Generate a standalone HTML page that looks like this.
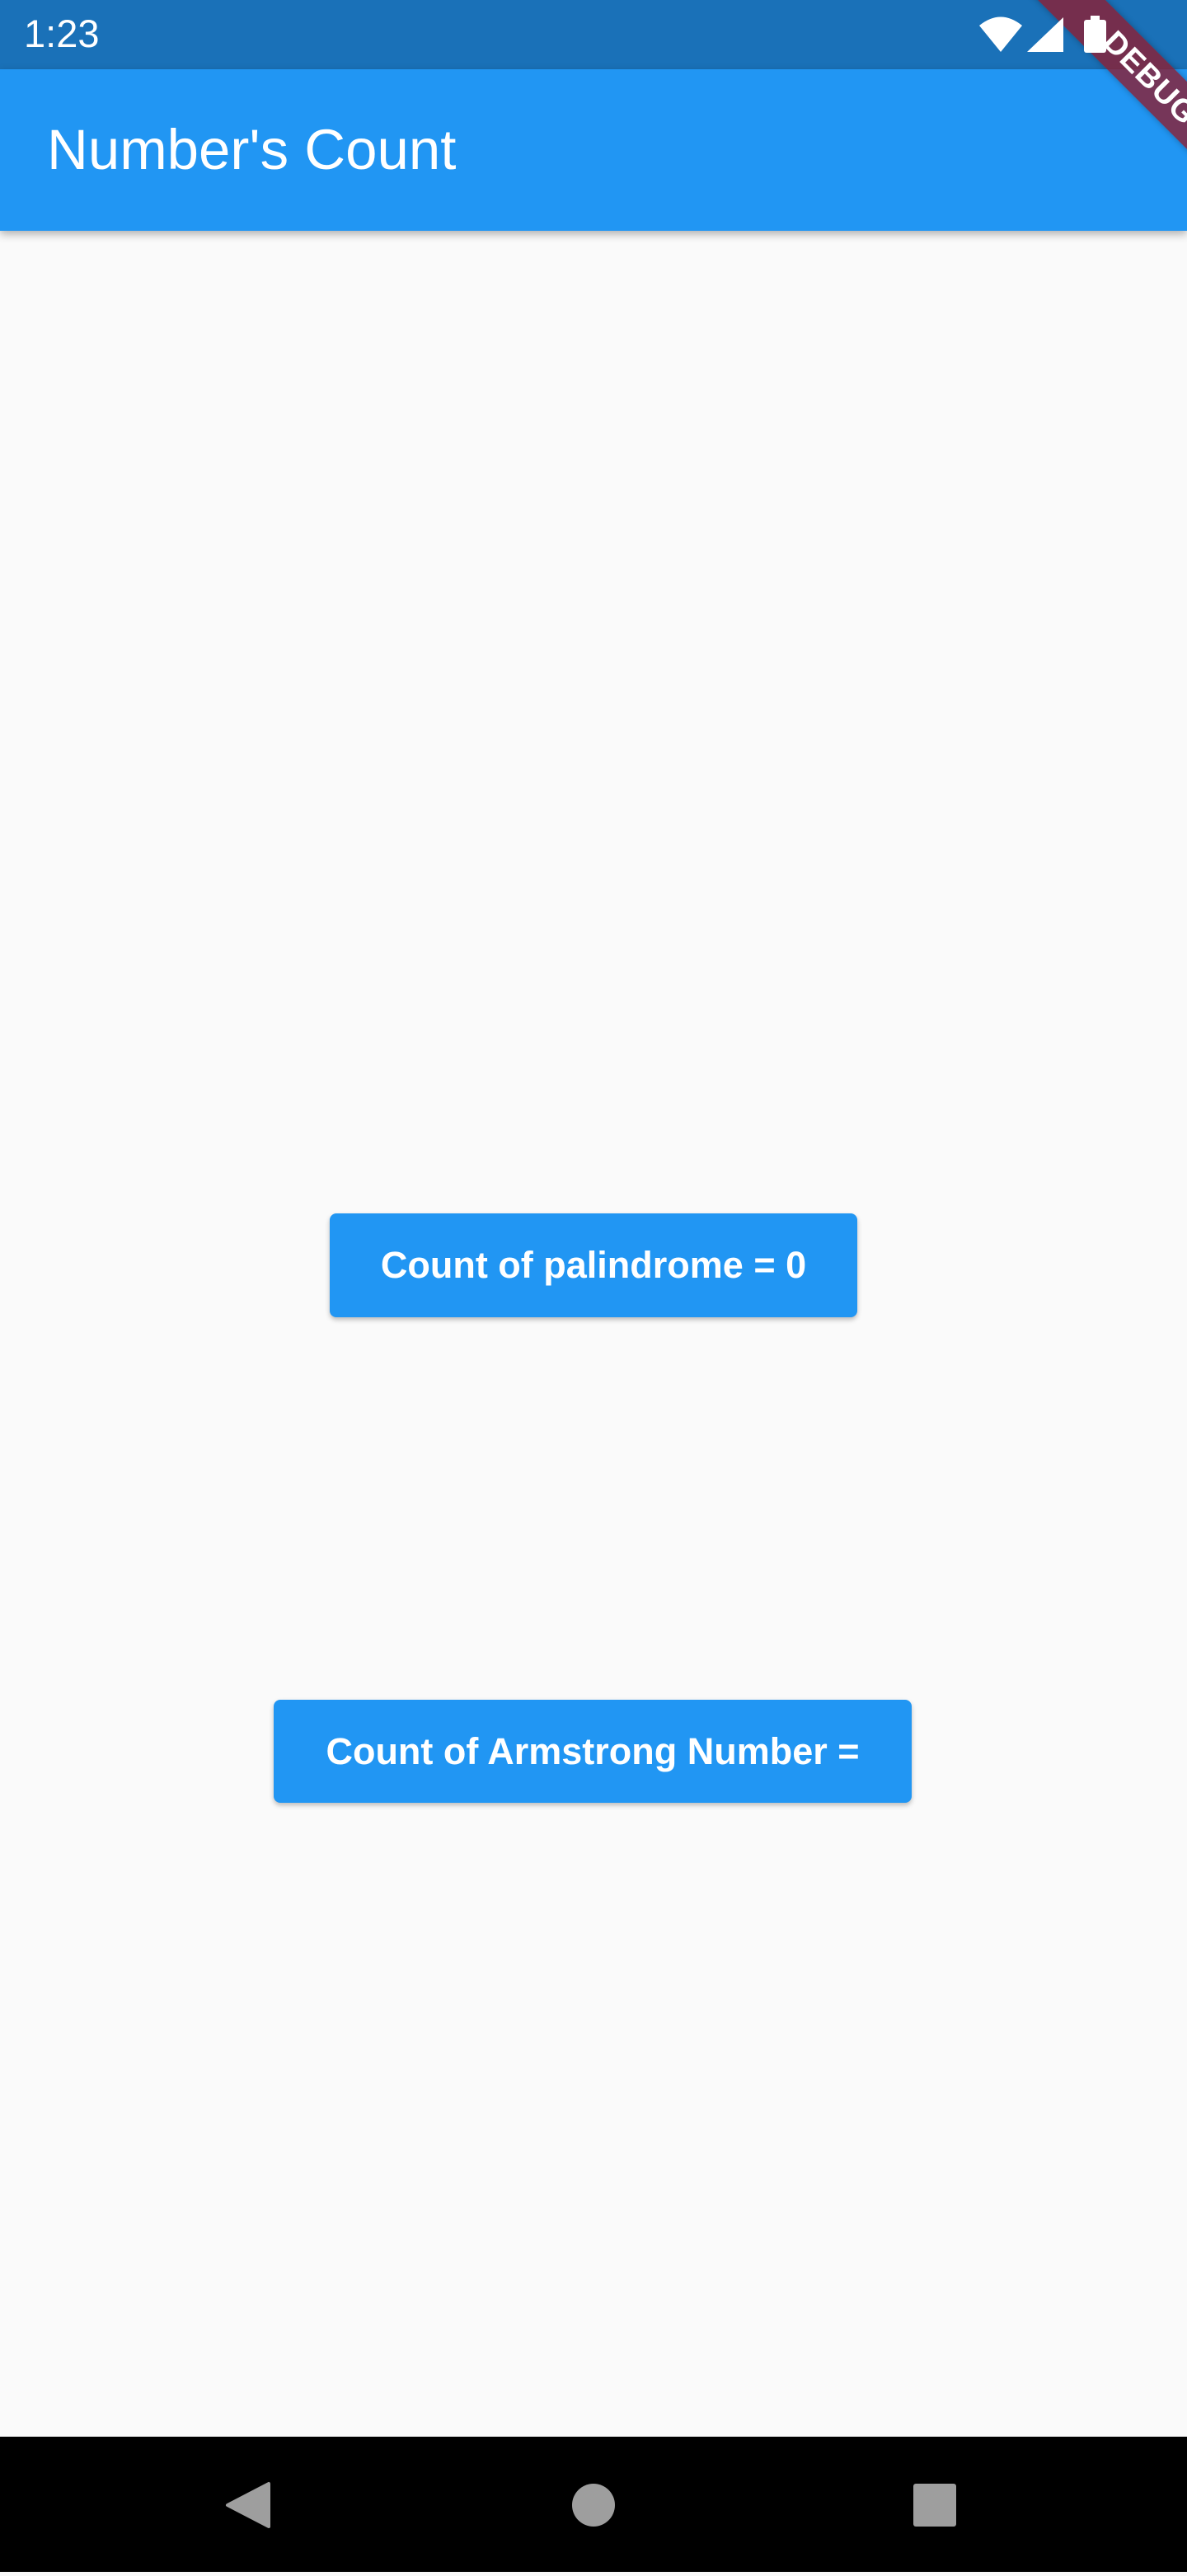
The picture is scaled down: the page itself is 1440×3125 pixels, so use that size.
<!DOCTYPE html>
<html><head><meta charset="utf-8"><style>
*{margin:0;padding:0;box-sizing:border-box}
body{width:1440px;height:3120px;background:#fafafa;position:relative;overflow:hidden;font-family:"Liberation Sans",sans-serif}
.status{position:absolute;left:0;top:0;width:1440px;height:84px;background:#1a71b8}
.time{position:absolute;left:29px;top:13px;color:#fff;font-size:47px}
.appbar{position:absolute;left:0;top:84px;width:1440px;height:196px;background:#2196f3;box-shadow:0 4px 10px rgba(0,0,0,.3)}
.title{position:absolute;left:57px;top:58px;color:#fff;font-size:69px}
.btn{position:absolute;background:#2196f3;color:#fff;border-radius:8px;box-shadow:0 3px 6px rgba(0,0,0,.25);font-weight:bold;font-size:45px;display:flex;align-items:center;justify-content:center}
.nav{position:absolute;left:0;top:2956px;width:1440px;height:164px;background:#000}
.banner{position:absolute;left:1195px;top:66px;width:400px;height:58px;background:rgba(140,30,50,.8);transform:rotate(45deg);transform-origin:center;color:#fff;font-weight:bold;font-size:38px;text-align:center;line-height:58px;box-shadow:0 0 8px rgba(0,0,0,.3);letter-spacing:1px}
.icons{position:absolute;left:1186px;top:18px;z-index:5}
</style></head><body>
<div class="status"><div class="time">1:23</div></div>
<div class="appbar"><div class="title">Number's Count</div></div>
<div class="banner">DEBUG</div>
<svg class="icons" width="160" height="50" viewBox="0 0 160 50">
<path d="M2 13 Q28 -8 54 13 L28 45 Z" fill="#fff"/>
<path d="M60 45 L104 3 L104 45 Z" fill="#fff"/>
<rect x="129" y="6" width="27" height="40" rx="3" fill="#fff"/><rect x="137" y="1" width="11" height="6" fill="#fff"/>
</svg>
<div class="btn" style="left:400px;top:1472px;width:640px;height:126px">Count of palindrome = 0</div>
<div class="btn" style="left:332px;top:2062px;width:774px;height:125px">Count of Armstrong Number =</div>
<div class="nav">
<svg width="1440" height="164" viewBox="0 0 1440 164">
<path d="M326 57 L326 109 L276 83 Z" fill="#9e9e9e" stroke="#9e9e9e" stroke-width="4" stroke-linejoin="round"/>
<circle cx="720" cy="83" r="26" fill="#9e9e9e"/>
<rect x="1108" y="57" width="52" height="52" rx="3" fill="#9e9e9e"/>
</svg></div>
</body></html>
